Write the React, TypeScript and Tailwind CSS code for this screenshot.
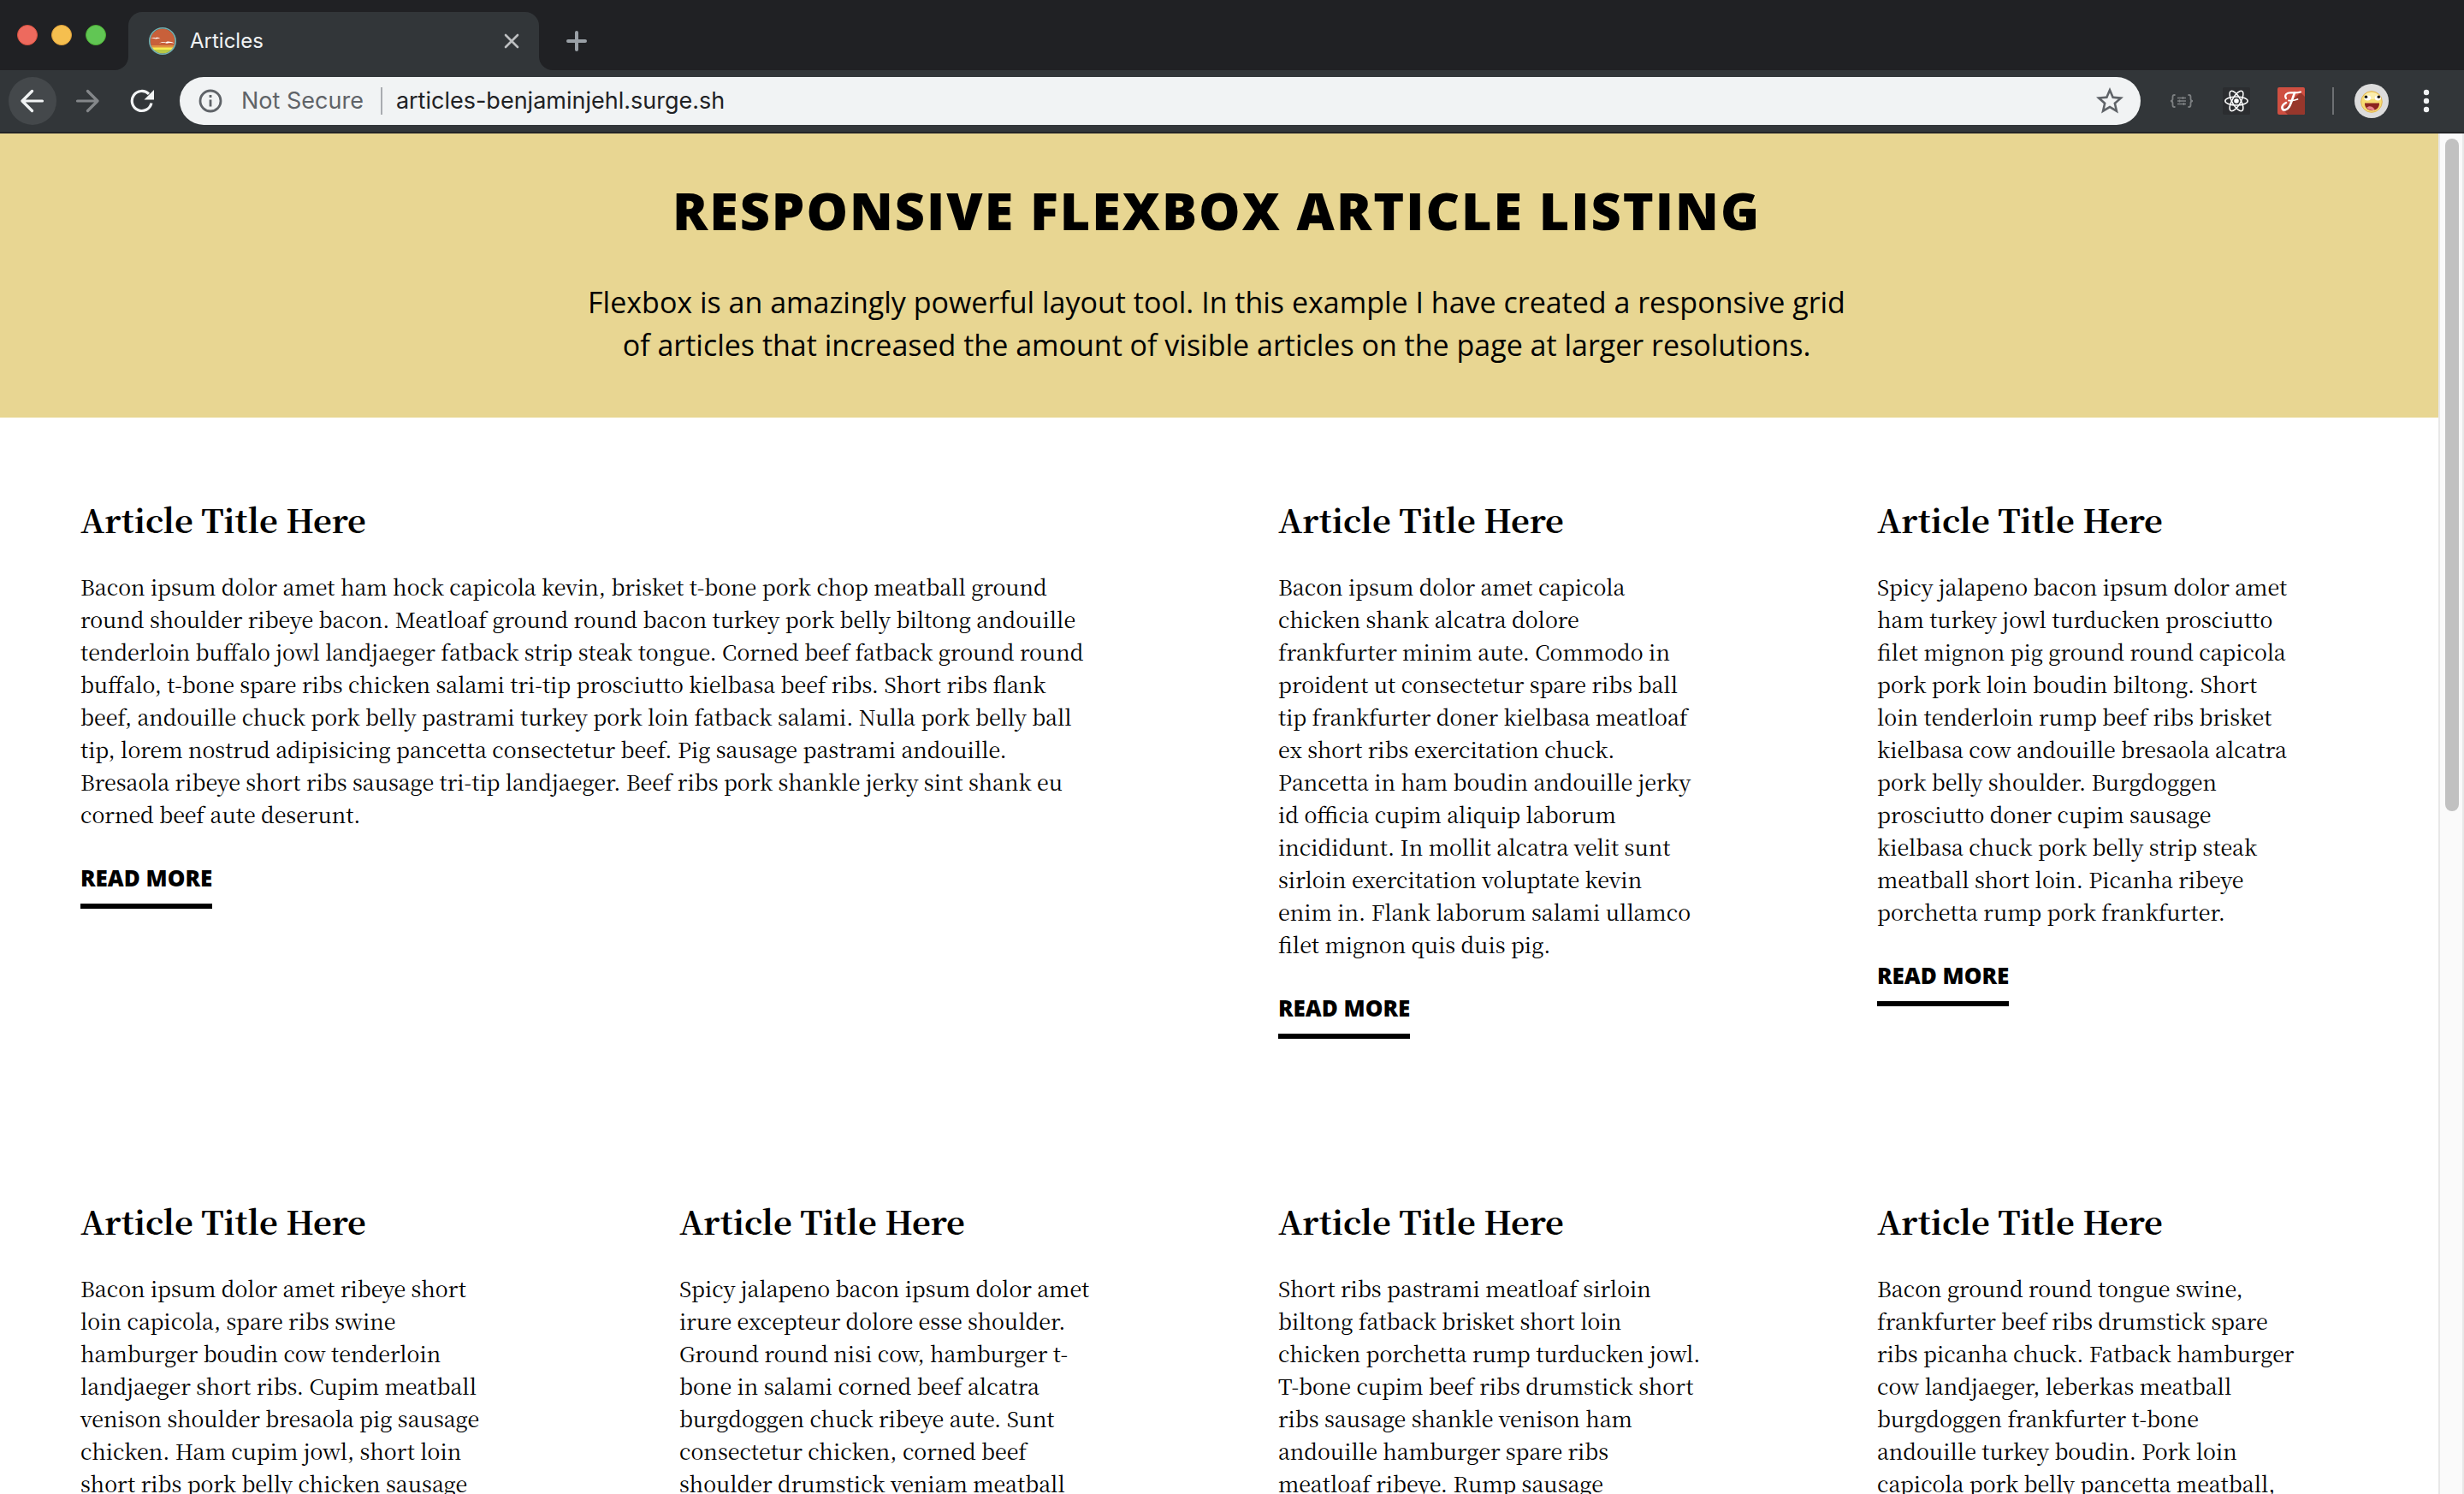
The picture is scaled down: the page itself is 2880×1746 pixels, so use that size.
import { useState } from "react";

type Article = { wide?: boolean; lines: string[] };

const articles: Article[] = [
  {
    wide: true,
    lines: [
      "Bacon ipsum dolor amet ham hock capicola kevin, brisket t-bone pork chop meatball ground",
      "round shoulder ribeye bacon. Meatloaf ground round bacon turkey pork belly biltong andouille",
      "tenderloin buffalo jowl landjaeger fatback strip steak tongue. Corned beef fatback ground round",
      "buffalo, t-bone spare ribs chicken salami tri-tip prosciutto kielbasa beef ribs. Short ribs flank",
      "beef, andouille chuck pork belly pastrami turkey pork loin fatback salami. Nulla pork belly ball",
      "tip, lorem nostrud adipisicing pancetta consectetur beef. Pig sausage pastrami andouille.",
      "Bresaola ribeye short ribs sausage tri-tip landjaeger. Beef ribs pork shankle jerky sint shank eu",
      "corned beef aute deserunt.",
    ],
  },
  {
    lines: [
      "Bacon ipsum dolor amet capicola",
      "chicken shank alcatra dolore",
      "frankfurter minim aute. Commodo in",
      "proident ut consectetur spare ribs ball",
      "tip frankfurter doner kielbasa meatloaf",
      "ex short ribs exercitation chuck.",
      "Pancetta in ham boudin andouille jerky",
      "id officia cupim aliquip laborum",
      "incididunt. In mollit alcatra velit sunt",
      "sirloin exercitation voluptate kevin",
      "enim in. Flank laborum salami ullamco",
      "filet mignon quis duis pig.",
    ],
  },
  {
    lines: [
      "Spicy jalapeno bacon ipsum dolor amet",
      "ham turkey jowl turducken prosciutto",
      "filet mignon pig ground round capicola",
      "pork pork loin boudin biltong. Short",
      "loin tenderloin rump beef ribs brisket",
      "kielbasa cow andouille bresaola alcatra",
      "pork belly shoulder. Burgdoggen",
      "prosciutto doner cupim sausage",
      "kielbasa chuck pork belly strip steak",
      "meatball short loin. Picanha ribeye",
      "porchetta rump pork frankfurter.",
    ],
  },
  {
    lines: [
      "Bacon ipsum dolor amet ribeye short",
      "loin capicola, spare ribs swine",
      "hamburger boudin cow tenderloin",
      "landjaeger short ribs. Cupim meatball",
      "venison shoulder bresaola pig sausage",
      "chicken. Ham cupim jowl, short loin",
      "short ribs pork belly chicken sausage",
    ],
  },
  {
    lines: [
      "Spicy jalapeno bacon ipsum dolor amet",
      "irure excepteur dolore esse shoulder.",
      "Ground round nisi cow, hamburger t-",
      "bone in salami corned beef alcatra",
      "burgdoggen chuck ribeye aute. Sunt",
      "consectetur chicken, corned beef",
      "shoulder drumstick veniam meatball",
    ],
  },
  {
    lines: [
      "Short ribs pastrami meatloaf sirloin",
      "biltong fatback brisket short loin",
      "chicken porchetta rump turducken jowl.",
      "T-bone cupim beef ribs drumstick short",
      "ribs sausage shankle venison ham",
      "andouille hamburger spare ribs",
      "meatloaf ribeye. Rump sausage",
    ],
  },
  {
    lines: [
      "Bacon ground round tongue swine,",
      "frankfurter beef ribs drumstick spare",
      "ribs picanha chuck. Fatback hamburger",
      "cow landjaeger, leberkas meatball",
      "burgdoggen frankfurter t-bone",
      "andouille turkey boudin. Pork loin",
      "capicola pork belly pancetta meatball,",
    ],
  },
];

function Favicon() {
  return (
    <svg viewBox="0 0 32 32" className="size-8 shrink-0" aria-hidden="true">
      <defs>
        <clipPath id="sunset">
          <circle cx="16" cy="16" r="14.5" />
        </clipPath>
      </defs>
      <g clipPath="url(#sunset)">
        <rect width="32" height="32" fill="#c8603a" />
        <rect y="21" width="32" height="3" fill="#e0913f" />
        <rect y="23.5" width="32" height="3" fill="#f6ec52" />
        <rect y="26" width="32" height="6" fill="#b9c944" />
      </g>
      <path d="M2 13c2-1.200 4-1.400 5.500-.6.8-1 3.500-.6 6 .8-2.500-.5-4-.4-5.500.2-2-.8-4-.8-6-.4z" fill="#fff" />
      <path d="M12 18.500c2.500-1.800 5.500-2 8-.9.800-1.700 6-1.200 9.500.9-3-.8-6.500-.8-8.500.2-3.500-1.200-6-1-9-.2z" fill="#fff" />
      <circle cx="16" cy="16" r="15.200" fill="none" stroke="#74b4b4" strokeWidth="1.600" />
    </svg>
  );
}

function TabStrip() {
  return (
    <div className="flex h-[82px] items-end bg-[#202124]">
      <div className="flex h-[82px] w-[150px] items-center gap-4 pl-5">
        <button aria-label="Close window" className="size-6 rounded-full border border-[#d8513f] bg-[#ed6a5e]" />
        <button aria-label="Minimize window" className="size-6 rounded-full border border-[#dfa03a] bg-[#f5bf4f]" />
        <button aria-label="Zoom window" className="size-6 rounded-full border border-[#4cae33] bg-[#61c654]" />
      </div>
      <div className="relative flex h-[68px] w-[480px] items-center rounded-t-2xl bg-[#323639] pl-6 pr-[22px]">
        <svg viewBox="0 0 16 16" className="absolute -left-4 bottom-0 size-4" aria-hidden="true">
          <path d="M16 0v16H0A16 16 0 0 0 16 0z" fill="#323639" />
        </svg>
        <svg viewBox="0 0 16 16" className="absolute -right-4 bottom-0 size-4" aria-hidden="true">
          <path d="M0 0v16h16A16 16 0 0 1 0 0z" fill="#323639" />
        </svg>
        <Favicon />
        <span className="ml-4 flex-1 text-2xl text-[#f1f3f4]">Articles</span>
        <button aria-label="Close tab">
          <svg viewBox="0 0 20 20" className="size-5" aria-hidden="true">
            <path d="M3 3l14 14M17 3L3 17" stroke="#bdbfc1" strokeWidth="2.600" strokeLinecap="round" />
          </svg>
        </button>
      </div>
      <button aria-label="New tab" className="mb-[22px] ml-8">
        <svg viewBox="0 0 24 24" className="size-6" aria-hidden="true">
          <path d="M12 2v20M2 12h20" stroke="#9aa0a6" strokeWidth="4" strokeLinecap="round" />
        </svg>
      </button>
    </div>
  );
}

function Toolbar() {
  const [url, setUrl] = useState("articles-benjaminjehl.surge.sh");
  return (
    <div className="flex h-[74px] items-center border-b-2 border-[#232427] bg-[#323639] pl-2.5 pr-9">
      <button aria-label="Back" className="flex size-14 items-center justify-center rounded-full bg-[#44484b]">
        <svg viewBox="0 0 28 28" className="size-7" aria-hidden="true">
          <path d="M25.500 14H2.500M13.500 2.500L2 14l11.500 11.500" fill="none" stroke="#f1f3f4" strokeWidth="3.200" strokeLinecap="round" strokeLinejoin="round" />
        </svg>
      </button>
      <button aria-label="Forward" className="ml-[22px]">
        <svg viewBox="0 0 28 28" className="size-7" aria-hidden="true">
          <path d="M2.500 14h23M14.500 2.500L26 14 14.500 25.500" fill="none" stroke="#84878a" strokeWidth="3.200" strokeLinecap="round" strokeLinejoin="round" />
        </svg>
      </button>
      <button aria-label="Reload" className="ml-9">
        <svg viewBox="0 0 28 28" className="size-7" aria-hidden="true">
          <path d="M25 16.500a11.500 11.500 0 1 1-3-10.600" fill="none" stroke="#f1f3f4" strokeWidth="3.200" />
          <path d="M28 1v11.500H16.500z" fill="#f1f3f4" />
        </svg>
      </button>
      <div className="ml-[30px] flex h-14 flex-1 items-center rounded-full bg-[#f1f3f4] pl-[22px] pr-5 text-[27px]">
        <svg viewBox="0 0 28 28" className="size-7 shrink-0" aria-hidden="true">
          <circle cx="14" cy="14" r="12" fill="none" stroke="#5f6368" strokeWidth="2.800" />
          <path d="M14 12.500v8M14 7v3" stroke="#5f6368" strokeWidth="2.800" />
        </svg>
        <span className="ml-[22px] text-[#5f6368]">Not Secure</span>
        <span className="ml-5 h-8 w-0.5 bg-[#a9acb0]" />
        <input
          aria-label="Address"
          value={url}
          onChange={(e) => setUrl(e.target.value)}
          className="ml-4 flex-1 bg-transparent text-[#202124] outline-none"
        />
        <button aria-label="Bookmark this page">
          <svg viewBox="2 2 20 20" className="size-8" aria-hidden="true">
            <path
              d="M22 9.240l-7.190-.62L12 2 9.190 8.630 2 9.240l5.460 4.730L5.820 21 12 17.270 18.180 21l-1.630-7.030L22 9.240zM12 15.400l-3.760 2.270 1-4.280-3.320-2.880 4.380-.38L12 6.100l1.710 4.040 4.380.38-3.320 2.880 1 4.280L12 15.400z"
              fill="#5f6368"
            />
          </svg>
        </button>
      </div>
      <div className="ml-8 flex items-center gap-8">
        <button aria-label="JSON viewer extension">
          <svg viewBox="0 0 32 32" className="size-8" fill="none" stroke="#7d8082" aria-hidden="true">
            <path d="M8.500 9H7.500Q5.500 9 5.500 11v2.500Q5.500 16 3 16q2.500 0 2.500 2.500V21q0 2 2 2h1" strokeWidth="1.800" />
            <path d="M23.500 9h1q2 0 2 2v2.500q0 2.500 2.500 2.500-2.500 0-2.500 2.500V21q0 2-2 2h-1" strokeWidth="1.800" />
            <path d="M11 12.500h10M11 16h10M11 19.500h10" strokeWidth="1.400" />
            <path d="M17.500 11v3M13.500 14.500v3M18.500 18v3" strokeWidth="1.400" />
          </svg>
        </button>
        <button aria-label="React developer tools">
          <svg viewBox="0 0 32 32" className="size-8" aria-hidden="true">
            <rect width="32" height="32" rx="2" fill="#2b2d30" />
            <g fill="none" stroke="#fff" strokeWidth="1.500">
              <ellipse cx="16" cy="16" rx="13.200" ry="5" />
              <ellipse cx="16" cy="16" rx="13.200" ry="5" transform="rotate(60 16 16)" />
              <ellipse cx="16" cy="16" rx="13.200" ry="5" transform="rotate(120 16 16)" />
            </g>
            <circle cx="16" cy="16" r="2.800" fill="#fff" />
          </svg>
        </button>
        <button aria-label="Fonts extension">
          <svg viewBox="0 0 32 32" className="size-8" aria-hidden="true">
            <rect width="32" height="32" rx="2" fill="#cf4f41" />
            <path d="M27 6l5 5v19q0 2-2 2H12l-6-6z" fill="#97372c" />
            <g fill="none" stroke="#fff" strokeLinecap="round">
              <path d="M10 13C7.500 9 11 6 16 6.300c4 .2 7 .2 11-.8" strokeWidth="2.200" />
              <path d="M20 6.500C17.500 13 16 19 13.500 23c-2.500 4-7 4.500-8 1.500-.6-2.500 2-5 4.500-6.500" strokeWidth="2.600" />
              <path d="M13 15.500c4 .3 7-.2 10.500-1.500" strokeWidth="1.800" />
            </g>
          </svg>
        </button>
        <span className="h-8 w-0.5 bg-[#6d7073]" />
      </div>
      <button aria-label="Profile" className="ml-6">
        <svg viewBox="0 0 40 40" className="size-10" aria-hidden="true">
          <circle cx="20" cy="20" r="20" fill="#dcdcdc" />
          <circle cx="20" cy="21" r="12.300" fill="#f7dc72" stroke="#e2b455" strokeWidth="1" />
          <ellipse cx="20" cy="14" rx="8" ry="4" fill="#fbeeae" />
          <path d="M12 22.500h17c.3 5-3.500 8.700-8.500 8.700S11.700 27.500 12 22.500z" fill="#8c2420" />
          <path d="M14 28c3-2.500 6-2 8.500.5l1.500 2q-5 2-10-2.500z" fill="#e8858a" />
          <ellipse cx="15.300" cy="16.500" rx="3.900" ry="2.900" fill="#fff" />
          <ellipse cx="27.300" cy="16.500" rx="3.600" ry="2.900" fill="#fff" />
          <circle cx="13.500" cy="15.300" r="1.800" fill="#1c1917" />
          <circle cx="28.300" cy="15.300" r="1.800" fill="#1c1917" />
        </svg>
      </button>
      <button aria-label="Browser menu" className="ml-9">
        <svg viewBox="0 0 16 32" className="h-8 w-4" fill="#f1f3f4" aria-hidden="true">
          <circle cx="8" cy="6" r="3.200" />
          <circle cx="8" cy="16" r="3.200" />
          <circle cx="8" cy="26" r="3.200" />
        </svg>
      </button>
    </div>
  );
}

function ArticleCard({ article }: { article: Article }) {
  return (
    <article className={article.wide ? "col-span-2" : ""}>
      <h2 className="text-[38px] font-bold leading-[56px]">Article Title Here</h2>
      <p className="mt-[31px] whitespace-pre text-[25px] leading-[38px]">{article.lines.join("\n")}</p>
      <a
        href="#"
        className="mt-[38px] inline-block border-b-6 border-black pb-3 font-['Open_Sans',sans-serif] text-[26px] font-extrabold leading-9"
      >
        READ MORE
      </a>
    </article>
  );
}

export default function App() {
  return (
    <div className="flex h-screen flex-col overflow-hidden bg-white font-['Inter',sans-serif]">
      <TabStrip />
      <Toolbar />
      <div className="flex min-h-0 flex-1">
        <div className="min-w-0 flex-1 overflow-hidden text-black">
          <header className="bg-[#e8d692] pb-[60px] pr-1.5 pt-12 text-center font-['Open_Sans',sans-serif]">
            <h1 className="text-[61px] font-extrabold leading-[84px] tracking-[2px]">
              RESPONSIVE FLEXBOX ARTICLE LISTING
            </h1>
            <p className="mx-auto mt-10 max-w-[1500px] text-[34px] leading-[50px]">
              Flexbox is an amazingly powerful layout tool. In this example I have created a responsive grid of
              articles that increased the amount of visible articles on the page at larger resolutions.
            </p>
          </header>
          <main className="grid grid-cols-4 gap-x-[200px] gap-y-[185px] pl-[94px] pr-[156px] pt-[91px] font-['Source_Serif_Pro','Noto_Serif_CJK_SC','Noto_Serif','Liberation_Serif',serif]">
            {articles.map((article, i) => (
              <ArticleCard key={i} article={article} />
            ))}
          </main>
        </div>
        <div className="w-[30px] border-x-2 border-[#e8e8e8] bg-[#fafafa] px-1.5 pt-1.5">
          <div className="h-[786px] w-4 rounded-full bg-[#c1c1c1]" />
        </div>
      </div>
    </div>
  );
}
